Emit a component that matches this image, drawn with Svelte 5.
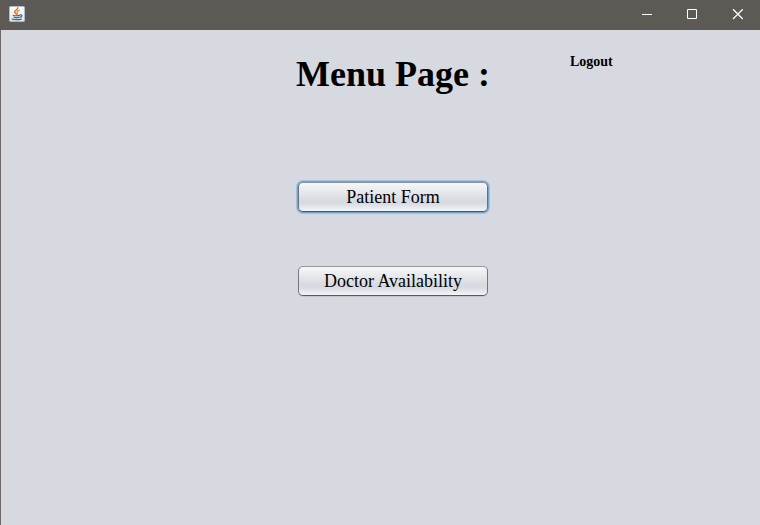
<script>
  const actions = [
    { label: 'Patient Form', focused: true },
    { label: 'Doctor Availability', focused: false }
  ];
</script>

<div class="window">
  <header class="titlebar">
    <svg class="java" viewBox="0 0 16 16" aria-hidden="true">
      <defs>
        <linearGradient id="tile" x1="0" y1="0" x2="0" y2="1">
          <stop offset="0" stop-color="#ffffff" />
          <stop offset="1" stop-color="#dde6ec" />
        </linearGradient>
      </defs>
      <rect x="0.5" y="0.5" width="15" height="15" rx="1" fill="url(#tile)" stroke="#a9bfcd" />
      <g fill="none" stroke-linecap="round">
        <path d="M8.7 1.8C9.4 3.5 5.2 4.6 5.6 6.1C5.8 7 7.1 7.4 7.5 8.3" stroke="#e8741a" stroke-width="1.5" />
        <path d="M10.3 4.3C8.6 5 7.8 5.7 8.3 6.6C8.7 7.2 8.8 7.6 8.2 8.2" stroke="#e98436" stroke-width="1.2" />
        <path d="M4.2 9.3C4.8 9.9 9.6 9.9 10.6 9.3M5 11.2C6.4 11.7 8.8 11.7 10 11.2M11.2 8.8C13.6 8.3 13.5 10.8 11.2 11.2" stroke="#3b6688" stroke-width="1.2" />
        <path d="M3.2 13.1C4.4 13.9 10.4 13.9 12.2 13.1" stroke="#3b6688" stroke-width="1.2" />
      </g>
    </svg>
    <div class="controls">
      <button aria-label="Minimize">
        <svg viewBox="0 0 11 11"><path d="M0 5.5H10" /></svg>
      </button>
      <button aria-label="Maximize">
        <svg viewBox="0 0 11 11"><path d="M0.5 0.5H9.5V9.5H0.5Z" /></svg>
      </button>
      <button aria-label="Close">
        <svg viewBox="0 0 11 11"><path stroke-width="1.3" d="M1 0.2L10.8 10M10.8 0.2L1 10" /></svg>
      </button>
    </div>
  </header>

  <main>
    <div class="heading">
      <h1>Menu Page :</h1>
      <a href="#logout">Logout</a>
    </div>
    <nav>
      {#each actions as action}
        <button class="action" class:focused={action.focused}>{action.label}</button>
      {/each}
    </nav>
  </main>
</div>

<style>
  :global(body) {
    margin: 0;
    background: #d6d9df;
  }

  .window {
    display: flex;
    flex-direction: column;
    min-height: 100vh;
    background: #d6d9df;
    color: #000;
    font-family: "Liberation Serif", "Times New Roman", serif;
  }

  .titlebar {
    display: flex;
    justify-content: space-between;
    height: 30px;
    padding-left: 9px;
    background: #5d5a56;
  }

  .java {
    width: 16px;
    height: 16px;
    margin-top: 6px;
  }

  .controls {
    display: flex;
  }

  .controls button {
    display: flex;
    justify-content: center;
    align-items: flex-start;
    width: 45px;
    padding: 9px 0 0;
    border: 0;
    background: none;
  }

  .controls svg {
    width: 11px;
    height: 11px;
    fill: none;
    stroke: #fff;
  }

  main {
    flex: 1;
    padding: 23px 0 0 25px;
    border-left: 1px solid #6e6a67;
  }

  .heading {
    display: grid;
    grid-template-columns: 1fr auto 1fr;
    column-gap: 80px;
    align-items: start;
  }

  h1 {
    grid-column: 2;
    margin: 0;
    font-size: 36px;
    line-height: 42px;
    white-space: nowrap;
  }

  a {
    justify-self: start;
    color: inherit;
    font-size: 14px;
    font-weight: bold;
    line-height: 18px;
    text-decoration: none;
  }

  nav {
    display: flex;
    flex-direction: column;
    align-items: center;
    gap: 54px;
    margin-top: 87px;
  }

  .action {
    box-sizing: border-box;
    width: 190px;
    height: 30px;
    padding: 0;
    border: 1px solid;
    border-color: #95989e #74777d #55585e #74777d;
    border-radius: 5px;
    background: linear-gradient(#f6f7f8, #e3e5e9 40%, #d6d9df 65%, #d9dce2 75%, #f4f6f9);
    box-shadow: 0 1px 0 #c3c6cc;
    color: inherit;
    font-family: inherit;
    font-size: 18px;
    line-height: 28px;
  }

  .focused {
    border-color: #8793a1 #66727f #4c565f #66727f;
    box-shadow: 0 0 0 1px #73a4d1, 0 0 0 2px #a3bfdc;
  }
</style>
